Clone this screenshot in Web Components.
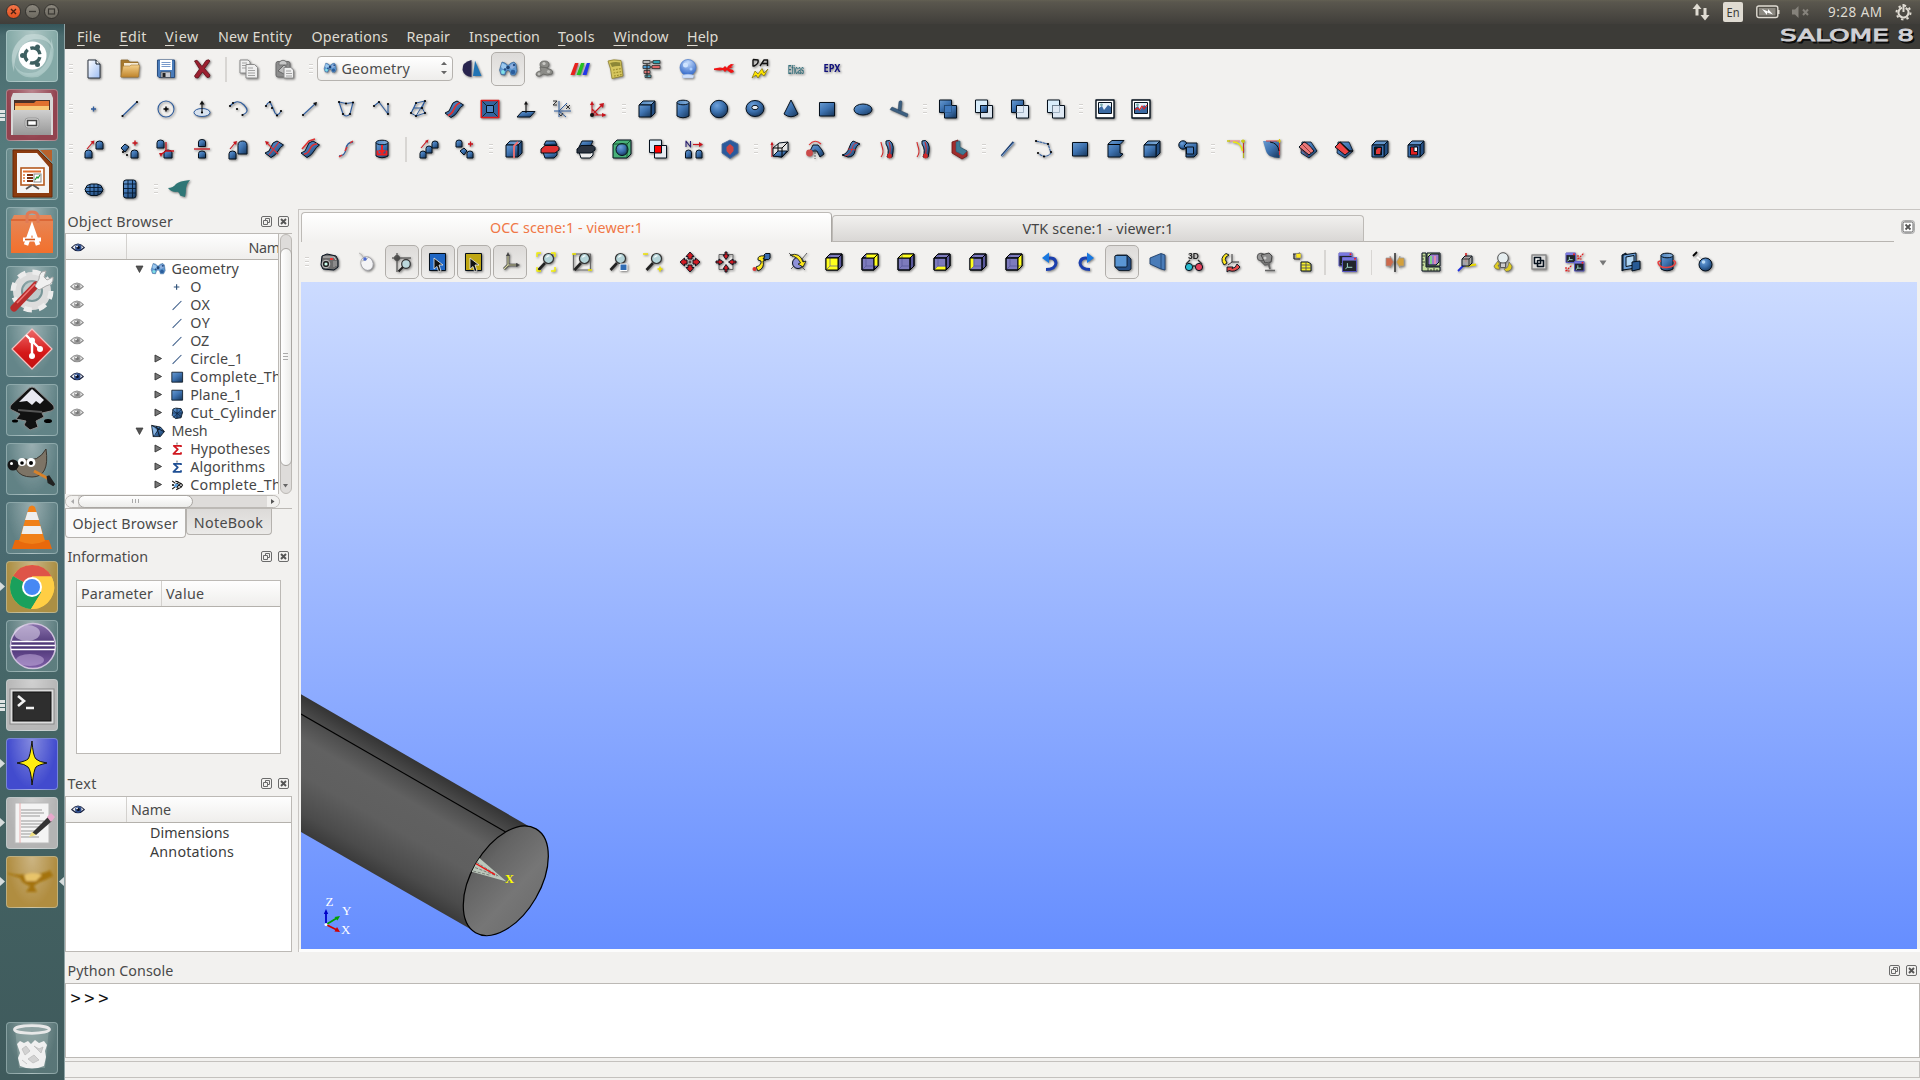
<!DOCTYPE html>
<html lang="en">
<head>
<meta charset="utf-8">
<title>SALOME 8</title>
<style>
html,body{margin:0;padding:0;width:1920px;height:1080px;overflow:hidden;background:#f2f1ef;font-family:"Noto Sans","Open Sans",sans-serif;font-size:14.3px;color:#4a4a4a}
</style>
</head>
<body>
<salome-desktop></salome-desktop>
<script>
const define = (name, css, html, setup) => customElements.define(name, class extends HTMLElement {
  connectedCallback() {
    if (this.shadowRoot) return;
    const root = this.attachShadow({mode: 'open'});
    root.innerHTML = `<style>:host{display:block;box-sizing:border-box}*{box-sizing:border-box}${css}</style>` + (typeof html === 'function' ? html(this) : html);
    if (setup) setup(this, root);
  }
});

/* ---------- icon drawings, 20x20 grid ---------- */
const R = '#c8141c', BL = '#2f5c9c';
const ln = (d, c = '#000', w = 1, x = '') => `<path d="${d}" fill="none" stroke="${c}" stroke-width="${w}" ${x}/>`;
const fl = (d, c, s = 'none', w = 1) => `<path d="${d}" fill="${c}" stroke="${s}" stroke-width="${w}"/>`;
const dot = (x, y, c = '#000', r = 1.1) => `<circle cx="${x}" cy="${y}" r="${r}" fill="${c}" stroke="none"/>`;
const dots = a => a.map(p => dot(p[0], p[1])).join('');
const house = (x, y, w = 7, h = 8) => `<path d="M${x} ${y + h}V${y + h * .35}Q${x} ${y} ${x + w / 2} ${y}Q${x + w} ${y} ${x + w} ${y + h * .35}V${y + h}Z"/>`;
const cube = (f = 'url(#b)', t = 'url(#l)', s = '#234d80', o = '') => `<path d="M2 6L6 2H18L14 6Z" fill="${t}"/><path d="M14 6L18 2V14L14 18Z" fill="${s}"/><path d="M2 6H14V18H2Z" fill="${f}"/>${o}`;
const mag = `${ln('M2.5 18L9 11', '#222', 2.6)}<circle cx="12.5" cy="6.5" r="5" fill="#b4d4d8" stroke="#333" stroke-width="1.2"/>${ln('M10.5 5.5q1-2 3-1.5', '#fff', 1.2)}`;
const sheet = '<path d="M1 14Q6 13 7 8T13 2L19.500 6Q16 8 14 12T7 18.500Z"/>';
const V = '#7d7bbd', Y = '#ffff1e';
const vc = (hl) => {
  const base = '<path d="M2 6L6 2H18L14 6Z" fill="' + V + '"/><path d="M14 6L18 2V14L14 18Z" fill="#5b599c"/><path d="M2 6H14V18H2Z" fill="' + V + '"/>';
  return base + fl(hl, Y, 'none') + ln('M6 2V14H18M2 18L6 14', '#55539a', .7) + ln('M2 6L6 2H18V14L14 18H2ZM2 6H14V18M14 6L18 2');
};
const sq = (x, y, f) => `<rect x="${x}" y="${y}" width="12" height="12.5" fill="${f}"/>`;
const cyl = '<path d="M4 3.500V17Q10 20.500 16 17V3.500"/><ellipse cx="10" cy="3.500" rx="6" ry="2.300" fill="url(#l)"/>';
const geo = '<g stroke="#2c5a8c" stroke-width=".6"><path d="M3 6L4 3 7 4 10 6.500 13 4 16 3 18 5 19 12 17 16 13 16 12 12.500 10 11 8 12.500 7 16 3 15.500 1.500 11Z" fill="#6098d0"/></g>' + fl('M4 4L8 6 9 9 5 10 3 8Z', '#9cc8ee') + fl('M12.500 6L16 4 17 8 14 10 12 9Z', '#8fb0de') + dot(5, 13, '#7fe0e6', 1.9) + dot(15, 13, '#2b5e9c', 2.3) + dot(10, 8.5, '#1e4070', 1.8) + dot(16, 6, '#2b4f86', 1.2) + dot(7, 10.5, '#24508c', 1.2);
const winIcon = (x, y, w) => `<rect x="${x}" y="${y}" width="${w}" height="${w}" fill="#20242a" stroke="#5a58c0"/><rect x="${x}" y="${y}" width="${w}" height="${w * .22}" fill="#7a78e0" stroke="none"/>${dot(x + w - 1.5, y + 1.3, '#e22', 1)}` + ln(`M${x + w * .35} ${y + w * .4}v${w * .3}h${w * .35}M${x + w * .35} ${y + w * .7}l-2 1.500`, '#bfe', .8);

const I = {
  new: '<path d="M4 1H12L16 5V19H4Z" fill="url(#pg)" stroke="#2c3440"/><path d="M12 1V5H16" fill="#fff"/>',
  open: '<path d="M1 1H8L9.500 3H18V18H1Z" fill="#a5782e" stroke="#8d6a30" stroke-width=".8"/><path d="M4 4H18V9H4Z" fill="#f4ead4" stroke="none"/><path d="M1 18L3 7H10L11 6H19.500L18.500 18Z" fill="url(#fo)" stroke="#a47a35" stroke-width=".6"/>',
  save: '<path d="M1.500 1H18.500V18.500H3L1.500 17Z" fill="#4a7cba" stroke="#2b4f80"/><rect x="4" y="1" width="12" height="10" fill="#fff" stroke="none"/>' + ln('M5.500 3.500H14.500M5.500 5.500H14.500M5.500 7.500H14.500', '#6a8fc4', .9) + '<rect x="5" y="13" width="9.500" height="5.500" fill="#c8ccd2" stroke="#333" stroke-width=".6"/><rect x="6.500" y="14" width="3" height="4" fill="#222" stroke="none"/>',
  del: '<path d="M2.500 2Q5.500 0 6.500 3L10 7.500 14 1.500Q17 0 18 2L12.500 9.500 18 16Q18 19 15 18.500L10.500 13 6 19Q3 19.500 2.500 17L7.500 10Z" fill="#9c2030" stroke="#5a1018" stroke-width=".8"/>',
  copy: '<g fill="#eee" stroke="#8b8b8b"><path d="M1 1H9L11 3V14H1Z"/>' + ln('M3 4H8M3 6.500H7M3 9H7', '#999', .9) + '<path d="M7 5.500H15.500L18.500 8.500V19H7Z"/></g>' + ln('M9 9H14M9 11.500H16M9 14H16M9 16.500H16', '#999', .9),
  paste: '<rect x="1" y="2.500" width="14" height="15.500" rx="2" fill="#8c8c8c" stroke="#6a6a6a"/><path d="M4 3.500Q8-1 12 3.500V6H4Z" fill="#c8c8c8" stroke="#777"/><path d="M3 12L9 6 14 10 9 15Z" fill="#bdbdbd" stroke="#666"/><path d="M9 8.500H16L18.500 11V19H9Z" fill="#eee" stroke="#8b8b8b"/>' + ln('M11 12H16M11 14.500H17M11 17H17', '#999', .9),
  shaper: fl('M9.500 1Q0 3 .5 11Q2 17 9.500 18Z', '#28244e') + fl('M13 1.500L19.500 17H11Z', '#2274b4'),
  geometry: geo,
  mesh: '<g fill="#8c8c88" stroke="#5e5e5a" stroke-width=".7"><ellipse cx="10.500" cy="5.500" rx="4.500" ry="3.500"/><path d="M6 8Q12 8 15 10Q20 11 18 15Q13 17 9 15Q5 19 2 16Q2 12 7 12Z"/></g>' + dot(10, 4.5, '#c8c8c4', 1.6) + dot(14.5, 12.5, '#bcbcb8', 1.6) + dot(5, 15, '#bcbcb8', 1.4),
  field: fl('M5 4H8.500L4.500 16H.5Z', '#e8211c') + fl('M11 4H14.500L10.500 16H6.500Z', '#24c022') + fl('M16.800 4H20L16.500 16H12.500Z', '#2338e8'),
  calc: '<path d="M2 2Q7 0 15 1.500L17 17 6 19.500Q5 9 2 2Z" fill="#d6c65e" stroke="#8f8230" stroke-width=".8"/><path d="M4 4Q9 2.500 14 3.500L14.500 7Q10 6.500 6 8Z" fill="#8d8736" stroke="none"/>' + ln('M7 11L15.500 9.500M7.500 14L16 12.500M8 17L16 15.500', '#9a8a2a', 1.1, 'stroke-dasharray="1.800 1.200"'),
  yacs: '<g stroke="#333" stroke-width=".8"><rect x="1" y="1.500" width="7" height="3" fill="#bbb"/><rect x="11" y="1.500" width="7" height="3" fill="#2da0b0"/><rect x="1" y="6.500" width="7" height="3" fill="#4b9ad0"/><rect x="10" y="6.500" width="8" height="3" fill="#d66"/><rect x="2" y="11.500" width="6" height="3" fill="#d77"/><rect x="3" y="16" width="6" height="2.500" fill="#5ab"/></g>' + ln('M9 3H11M8 8H10M5 5V18', '#222'),
  globe: '<circle cx="10" cy="8.500" r="8" fill="url(#gl)" stroke="#4a7acc" stroke-width=".7"/><path d="M4 16.500Q10 14 16 16.500L15 19H5Z" fill="#cfe0fa" stroke="#a8c0e8" stroke-width=".5"/>' + dot(7.5, 6, '#cfe4ff', 2.5) + dot(13, 10, '#a8ccff', 1.5),
  fish: fl('M0 9.500L6 8.500 9 9 11 7 13 9 14 7 17 5 20 5.500 17 7.500 19 8 15 9.800 19 11 20 13 17 14 14 12 13 11 11 13 9 11 6 11.500 0 11Z', '#f01414'),
  da: ln('M3 0.500V7H4Q9 5 8 1 6 0.500 3 .5M10 7L14 1H17.500L17.500 7M12 4.500H17.500', '#111', 1.4) + '<path d="M2 19L5 12 8 15 12 9.500 14 14 18 10 14 17 11 14.500 8 19 6 16Z" fill="#ffe600" stroke="#6b5e00" stroke-width=".6"/>',
  eficas: '<text x="2" y="14.500" font-size="13" font-weight="bold" textLength="16" lengthAdjust="spacingAndGlyphs" fill="#35707c" stroke="none" font-family="Liberation Sans">Eficas</text>',
  epx: '<text x="1.500" y="12.500" font-size="9.800" font-weight="bold" textLength="17" lengthAdjust="spacingAndGlyphs" fill="#10107c" stroke="none" font-family="Noto Sans">EPX</text>',
  point: ln('M7 10H12M9.500 7.500V12.500', BL, 1.3),
  line: ln('M2.500 17L17 3', BL, 1.2) + dots([[2.5, 17], [17, 3]]),
  circle: `<ellipse cx="10" cy="10" rx="8" ry="8" fill="none" stroke="${BL}" stroke-width="1.100"/>` + ln('M7.500 10H12.500M10 7.500V12.500', '#000', 1.4),
  ellipse: `<ellipse cx="10" cy="13.500" rx="8" ry="4" fill="#d8e2ee" stroke="${BL}"/>` + ln('M10 14V3', '#111', 1.1) + fl('M7.500 5.500L10 1.500 12.500 5.500Z', '#111') + dot(10, 13.5),
  arc: ln('M2 7Q9-1 16 6T14 16', BL, 1.2) + dots([[2, 7], [14.5, 16], [9, 10], [5, 4]]),
  curve: ln('M2 7Q5 1 7 5T11 14Q14 18 17 12', BL, 1.2) + dots([[2, 7], [6, 3], [8, 9], [13, 16.5], [17, 12]]),
  vector: ln('M3 16L16 4', BL, 1.1) + fl('M13 4L17 3 16 7Z', '#111') + dot(3, 16),
  sketch: ln('M3 3L10 4.500L17 3.500L14 15Q10 19 7 15Z', BL, 1.1) + dots([[3, 3], [17, 3.5], [14, 15], [7, 15], [10, 4.5]]),
  poly: ln('M2 7L7 3 16 15V5', BL, 1.1) + dots([[2, 7], [7, 3], [16, 15], [16, 5]]),
  sketch3: ln('M8 4L17 2 14 9 17 14 8 17 3 14 6 9ZM6 9L14 9M8 4L3 14M17 2L8 17', BL, 1) + dots([[8, 4], [17, 2], [8, 17], [3, 14], [14, 9], [17, 14]]),
  ribbon: sheet + ln('M4 16.500Q8 15 10 10T16 4', '#e03030', 1.8),
  frame: `<rect x="1.300" y="1.500" width="17.400" height="17" fill="#33659f" stroke="#e01a1a" stroke-width="1.600"/><rect x="6.500" y="6.500" width="7" height="7" fill="#4f86c4"/>` + ln('M2.500 2.500L6.500 6.500M17.500 2.500L13.500 6.500M2.500 17.500L6.500 13.500M17.500 17.500L13.500 13.500', '#122', .9),
  wplane: '<path d="M1 18L6 12.500H19L14 18Z"/>' + ln('M10 14V4', '#111', 1.1) + fl('M8 5.500L10 2 12 5.500Z', '#111'),
  lcs: ln('M7 2V18M2 12H19M7 12L15 4M7 12L14 18', BL, 1) + ln('M1 2H5L1 6H5M14 6L18 10M18 6L14 10M7 15L9 17 11 14', '#222', .9),
  origin: ln('M4 16V4M4 16H17M4 16L14 6M4 10L10 16', R, 1.1) + fl('M2 6L4 2 6 6ZM14 14L18.500 16 14 18ZM11 5L16 4 15 9Z', R) + dot(4, 16, '#111', 2),
  box: cube(),
  cyl,
  sphere: '<circle cx="10" cy="10" r="8.700" fill="url(#r)"/>',
  torus: '<ellipse cx="10" cy="9.500" rx="9" ry="8" fill="url(#r)"/><ellipse cx="10" cy="8.500" rx="3.200" ry="2.200" fill="#e8eef4"/>',
  cone: '<path d="M10 1L17 15Q10 20.500 3 15Z"/>',
  rect: '<rect x="2.500" y="3.500" width="15" height="13.500"/>',
  disk: '<ellipse cx="10" cy="10.500" rx="9" ry="5.500"/>',
  pipet: fl('M1 10.500L3 8 19 15 18 18ZM9 11L10 2.500Q12 1 13 2.500L12 12Z', '#3c5f80', '#2a4764', .5),
  fuse: sq(1.5, 1, 'url(#b)') + sq(6.5, 6.5, 'url(#b)') + '<path d="M6.500 6.500H13.500V13.500H6.500Z" fill="#4079bd" stroke="#27517f" stroke-width=".6"/>',
  common: sq(1.5, 1, '#d8ecfa') + sq(6.5, 6.5, '#dbe4ee') + '<rect x="6.500" y="6.500" width="7" height="7"/>',
  cut: sq(1.5, 1, 'url(#b)') + sq(6.5, 6.5, '#dfe9f4') + ln('M6.500 13.500H13.500V6.500', '#8ea0b4', .8),
  section: sq(1.5, 1, '#d8ecfa') + sq(6.5, 6.5, '#dfe9f4') + '<rect x="6.500" y="6.500" width="7" height="7" fill="none" stroke="#8fa3b5" stroke-width=".8"/>',
  pic1: '<rect x="1" y="1" width="18" height="18" fill="#fff" stroke-width="1.400"/><rect x="3.500" y="3.500" width="13" height="11" fill="#e6f0f8"/><path d="M4 14V9L7 7 9 11 13 6 16 8V14Z" fill="#3b6aa2" stroke="none"/>' + dot(6.5, 5.8, '#7aa', 1.4),
  translate: house(1, 11) + house(12, 2) + ln('M3 10L9 3', R, 1.1) + fl('M6.500 2.500L10.500 1.500 9.500 5.500Z', R),
  rotate: '<path d="M1 9L5 5 9 8 5 13Z"/>' + house(11, 11, 7, 8) + ln('M12.500 4H17.500M15 1.500V6.500', R, 1.4) + dots([[3, 13], [7, 16]]),
  local: house(1, 1, 7, 8) + house(8, 11, 8, 8) + ln('M10 3V12H18M10 12L4 16', R, 1.3) + fl('M3 14L7 14 5 18Z', R),
  mirror: house(6.5, 0.5, 7, 7) + house(6.5, 12, 7, 7) + ln('M2 10H18', R, 1.3),
  scale: house(1, 12) + house(10, 2, 9, 13) + ln('M2 10L7 4', R, 1.1) + fl('M5 3L9 2 8 6Z', R),
  offset: sheet + ln('M3 4L14 15M15 3L5 16', '#e03030', 1.1) + fl('M1 2L5 3 2.500 6Z', R),
  project: sheet + ln('M2 10L9 2 15 0M4 15Q8 15 10 10T17 5', '#e03030', 1.5),
  ridge: ln('M3 17Q9 17 10 10T17 3', BL, 1.3) + ln('M3 18L6 16M9 12L11 8M14 4L17 2', '#e03030', 1.5),
  tap: cyl + ln('M10 6V14M5.500 11.500V15.500H14.500V11.500', '#f02020', 2) + fl('M6.500 11L10 15.500 13.500 11Z', '#f02020'),
  multi: house(1, 12, 6, 7) + house(7, 7, 6, 7) + house(13, 2, 6, 7) + ln('M2 9L8 2', R, 1.1) + fl('M6 2L9.500 .5 8.500 4Z', R),
  mrot: house(1, 1, 6, 7) + '<path d="M5 12L9 9 12 12 9 16Z"/>' + house(12, 12, 6, 7) + ln('M13 5H18M15.500 2.500V7.500', R, 1.3),
  part: cube() + ln('M10 19V7L14 3', '#f07070', 1.8),
  cut2: '<path d="M6 2H15L17 6H4Z"/><path d="M3 13H17V16L14 19H5Z"/><path d="M1 10L5 6.500H17L19 8.500V11L15 14H1Z" fill="#e03030"/>',
  slice: '<path d="M6 2H17L14 8H3Z"/><path d="M3 13H17V16L14 19H5Z" fill="#eee"/><path d="M1 10L5 6.500H17L19 8.500V11L15 14H1Z" fill="#2c3440"/>',
  shrink: '<path d="M1 5L5 1H19V15L15 19H1Z" fill="#48b078"/><circle cx="10" cy="10.500" r="6" fill="url(#r)"/>' + ln('M1 5H15V19M15 5L19 1', '#0c3c20', .8),
  same: sq(1.5, 1, '#d8ecfa') + sq(6.5, 6.5, '#e6eaf0') + '<rect x="6.500" y="6.500" width="7" height="7.500" fill="#f00"/>',
  nto: house(1.5, 11, 6, 8) + house(12, 11, 6, 8) + ln('M2 8V2L6.500 8V2', '#271c70', 1.1) + ln('M9 5.500H16', R, 1.2) + fl('M15 3L19 5.500 15 8Z', R),
  shield: '<path d="M10 1L18 5V14L10 19.500 2 14V5Z" fill="#2a5a9c" stroke="#4a6a9c" stroke-width=".8"/>' + fl('M10 5L13.500 8V12L10 16 6.500 12V8Z', '#cc4444'),
  ext: ln('M3 18V4', R, 1.1) + fl('M1.500 6L3 2.500 4.500 6Z', R) + '<path d="M4 9L10 4 19 3V12L13 18 4 17Z" fill="#e4e4e4"/><path d="M4 17L9 12H18L13 18Z"/>' + ln('M4 9L13 9V18M13 9L19 3M9 5V12', '#000', 1),
  rev: '<path d="M5 12L8 6H13L17 11 19 15 15 18 12 12 9 12Z"/>' + dot(4.5, 14, '#cc4a4a', 3.4) + ln('M4 6Q10-1 16 5', '#e03030', 1.1) + ln('M10 10V20', '#444', .8, 'stroke-dasharray="2 1"'),
  fill: '<path d="M1 16Q6 15 8 9T12 2L19 5Q15 6 14 12T7 18Z"/>' + ln('M4 17Q10 16 11 10T16 4M7 10L15 11', '#e03030', .9),
  pipe: '<path d="M9 2Q13 0 15 4Q17 8 16 13L15 18H10Q13 11 9 5Z"/>' + ln('M4 18Q7 14 5.500 9T4 3M12 3Q14.500 9 12 17', '#d02828', 1.1) + dot(12.5, 17, '#d02828', 2.4),
  thick: fl('M3 3L9 1V8L18 12V17L13 20L3 14Z', '#a02c2c', '#701818', .8) + fl('M7 3L11 2V8L18 12 14 16 7 12.500Z', '#3f7a94', '#2b5a70', .6),
  edge: ln('M3.500 17L15.500 3', '#1c3c6c', 2) + ln('M4 17L16 3.500', '#8ab0e0', 1),
  wire: ln('M2 2L14 5 17 14Q12 20 5 15', BL, 1.1, 'stroke-dasharray="3 .5"') + dots([[2, 2], [14, 5], [17, 13], [4, 14], [10, 17.5]]),
  shell: '<path d="M2 5L6 1.500H18L14 5.500V14L17 15 14 18H2Z"/>' + ln('M2 5.500H14', '#000'),
  comp: '<circle cx="5" cy="6" r="4.200" fill="url(#r)"/><path d="M6 7L9 4H19V15L16 18H8V9Z"/><rect x="8.500" y="8" width="7" height="7" fill="#4a7fc0"/>',
  fillet1: ln('M17.500 2V19', '#b4b420', 1.2) + ln('M3 2H14', '#e88', 1.2) + ln('M17.500 4V14', '#c03030', 1) + ln('M7 3Q15 3 16.500 12', '#eaea10', 1.4) + ln('M1 2H4M15 2H19M17 .5V4', '#c8c810', 1.4),
  fillet2: fl('M1 2H17.500V19Q6 19 4 12Z', 'url(#b)') + ln('M4 2H17.500V16', '#d84040', 1.1) + ln('M8 3Q16 4 17 12', '#111', 1) + ln('M15 2H19M17.500 0V4', '#d8c810', 1.2),
  fillet3: '<path d="M4 3H13L19 12 11 19 3 14Z" stroke-width=".8"/><path d="M1 8L6 3Q10 4 16 12L11 16Z" fill="#e87878"/>' + ln('M4 5L13 14M2.500 10L10 17', '#822', .8),
  chamfer: '<path d="M4 3H15L19 12 11 19 3 14Z" stroke-width=".8"/><path d="M1 8L6 3 16 12 11 16Z" fill="#f04444"/>' + ln('M6 3L15 12H19', '#111', 1.3),
  hexf: cube('#3d70ae', '#6394ca', '#234d80', '<rect x="4.500" y="8" width="7" height="8" fill="#101820"/><path d="M6 11L8 9H11L10 15H6Z" fill="#e23a3a" stroke="none"/>'),
  hexw: cube('#3d70ae', '#6394ca', '#234d80', '<rect x="4.500" y="8" width="7" height="8" fill="#e22020"/><rect x="8" y="8" width="3.500" height="4.500" fill="#fff"/>'),
  quad: '<path d="M1 10.500L3 6.500 7 5H13L17 6.500 19 10.500 17 14.500 13 16.500H7L3 14.500Z"/>' + ln('M2 8.500H18M1 12.500H19M6 5V16M10 5V16.500M14 5V16', '#061a30', .9),
  hex: '<rect x="3.500" y="1" width="12.500" height="18" rx="2.500"/>' + ln('M4 5H16M4 9.500H16M4 14H16M8 1V19M12.500 1V19', '#061a30', .9),
  hexotic: fl('M-1 9Q4 9 7 5Q10 2 21 1Q18 4 17 9Q17 14 16 18L11 16.500Q10 12 7 13Q2 13 -1 9Z', '#2f7676'),
  /* viewer icons */
  camera: '<path d="M2 4L7 2 16 4 18 8V15L14 18 3 17 1 13Z" fill="#6c6c6c"/><path d="M3 5H14L16 8" fill="none" stroke="#ccc"/><circle cx="6" cy="12" r="3.800" fill="#222" stroke="#ccc"/>' + dot(6, 12, '#cfe', 1.6) + fl('M10 6H13V8H10Z', '#e33') + ln('M14 9V15M16 9V14', '#bbb', .8),
  mouse: '<ellipse cx="11" cy="11.500" rx="6" ry="7" fill="#f4f4f6" stroke="#a0a0a6" transform="rotate(-25 11 11.500)" stroke-width=".8"/>' + ln('M6 9Q10 9 13 5', '#aaa', .8) + dot(9, 7, '#4a6ad0', 1.8) + ln('M7 5Q6 2 3 1', '#aaa', .8),
  zstyle: ln('M0 6H19M5 1V20M3 4H7V8H3Z', '#333', 1) + '<circle cx="14" cy="12" r="4.300" fill="#bcd8dc" stroke="#333" stroke-width="1.200"/>' + ln('M11 15L6.500 19.500', '#222', 2.2),
  sel1: '<rect x="1.500" y="1.500" width="16" height="17" fill="#1f66c4"/><path d="M6 6L15 13H11L13 19 10.500 19.500 9 14.500 6 17Z" fill="#111" stroke="#eee" stroke-width=".8"/>',
  sel2: '<rect x="1.500" y="1.500" width="16" height="17" fill="#bfa714"/><path d="M6 6L15 13H11L13 19 10.500 19.500 9 14.500 6 17Z" fill="#111" stroke="#eee" stroke-width=".8"/>',
  trihedron: ln('M8 3V13L4 17M8 13H18', '#333', 2.6) + ln('M8 3V13L4 17M8 13H18', '#d8d8a8', 1.2) + fl('M6 4L8 0 10 4ZM16 11L20 13 16 15Z', '#444'),
  fitall: mag + ln('M1 5V1H5M15 1H19V5M1 15V19H5M15 19H19V15', '#f4f000', 1.4),
  fitarea: '<rect x="1.500" y="2" width="17" height="16" fill="none" stroke="#666" stroke-width="1.200"/>' + mag + ln('M0 2H4M16 18H20', '#f0e800', 1.6),
  fitsel: mag + '<rect x="12" y="12" width="7" height="6.500" fill="#2f6cb4" stroke="#fff"/>',
  zoom: mag + ln('M-1 2H4M13.500 17H18.500M16 14.500V19.500', '#f0e400', 1.5),
  pan: '<g fill="#d01c24" stroke-width=".9"><path d="M10 0L14 4.500H12V7H8V4.500H6Z"/><path d="M10 20L14 15.500H12V13H8V15.500H6Z"/><path d="M0 10L4.500 6V8H7V12H4.500V14Z"/><path d="M20 10L15.500 6V8H13V12H15.500V14Z"/></g>' + ln('M8.500 10H11.500M10 8.500V11.500', '#111', .8),
  gpan: '<rect x="3" y="2.500" width="14" height="15" fill="none" stroke="#666"/><g fill="#d01c24" stroke-width=".9"><path d="M10 7.500L7 3H9V0H11V3H13Z"/><path d="M10 12.500L7 17H9V20H11V17H13Z"/><path d="M7.500 10L3 7V9H0V11H3V13Z"/><path d="M12.500 10L17 7V9H20V11H17V13Z"/></g>',
  chpt: '<path d="M12 3L13.500 1.500H18V6L16.500 7.500H12Z" fill="#3a6cb0"/><path d="M13 4Q5 3 6 8L9 9Q10 13 4 15L6 19Q13 16 11 9L14 8 11 7Z" fill="#ffe81c" stroke-width=".9"/>' + dot(2.5, 17, '#d33', 2),
  rot: ln('M1 1L5 5M19 1L14 7M17 18L13 14M3 17L6 14', '#555', .9) + '<circle cx="10" cy="11" r="5.500" fill="#8f92d8"/><path d="M2 3Q12 0 15 10L18 9 15 15 10 12 12.500 11Q10 5 2 3Z" fill="#ffe81c" stroke-width=".8"/>',
  vfront: vc('M2 6H14V18H2Z'), vback: vc('M6 2H18V14L14 14V6H6Z'), vtop: vc('M2 6L6 2H18L14 6Z'), vbottom: vc('M2 18L5 14.500H14V18Z'), vleft: vc('M2 6H5.500V14.500L2 18Z'), vright: vc('M14 6L18 2V14L14 18Z'),
  ccw: ln('M6 7Q15 4 16 11Q15.500 17.500 6 17.500', '#1b3fae', 3) + fl('M2 6L9 0.500V11Z', '#1878e0'),
  cw: ln('M14 7Q5 4 4 11Q4.500 17.500 14 17.500', '#1b3fae', 3) + fl('M18 6L11 0.500V11Z', '#1878e0'),
  ortho: '<path d="M3 4L5 3H15L19 7V17L17 18.500H7L3 15Z" fill="#254f86" stroke-width=".8"/><rect x="3" y="3.500" width="12" height="11.500" rx="1" fill="#5a96d4" stroke-width=".8"/>',
  persp: '<path d="M2 6L13 1.500 17 3V18L13 17 2 12Z" fill="#4a7cb8" stroke="#1d3f6c" stroke-width=".9"/>' + ln('M13 2V17', '#1d3f6c', .8),
  stereo: '<text x="4" y="7" font-size="8.500" font-weight="bold" fill="#222" stroke="none" font-family="Liberation Sans">3D</text><circle cx="5" cy="15" r="3.600" fill="#28bcd0"/><circle cx="15" cy="15" r="3.600" fill="#e4405a"/>' + ln('M2 12L6 8M18 12L14 8M8.500 14H11.500', '#333', 1.3),
  resetv: ln('M12 2V10L8 13M12 10H19', '#333', 1) + '<path d="M4 13Q-1 6 6 1.500L9 3 6 5Q4 7 7 11Z" fill="#ffe81c" stroke-width=".9"/><path d="M7 15L13 15 12 16.500Q16 16 17 12L20 15Q15 21 9 18.500L7 20Z" fill="#e64a48" stroke-width=".9"/>',
  graph: '<circle cx="5" cy="5" r="3.800" fill="#999" stroke="#555"/><path d="M5 3L13 1 16 4 15 10 9 11Z" fill="#8c8c8c" stroke="#444"/>' + ln('M12 10L14 17M5 9L9 13 14 12M9 18.500H19', '#666', 1.7) + dot(9, 6, '#ccc', 1.5),
  dump: ln('M1 2H5L8 1M2 2V7M2 7H8', '#222', 1.2) + '<rect x="4" y="1.500" width="5" height="4.500" fill="#ffe81c" stroke="#888" stroke-width=".6"/><path d="M9 10H16L19 12V19H9Z" fill="#f6ee2c"/>' + ln('M9 13H19M9 16H19M14 10V19', '#555', .9),
  sync: winIcon(1, 1, 13) + winIcon(4.5, 5.5, 14),
  flip: ln('M10 1V20', '#111', 1.3) + fl('M1 6H5L5 4 8.500 10 5 16V14H1Z', '#cc6a4c', '#999', .6) + fl('M19 6H15L15 4 11.500 10 15 16V14H19Z', '#d3a03c', '#999', .6),
  ruler: '<path d="M1 1H5V15H19V19H1Z" fill="#c4dc9c"/>' + ln('M1 4H4M1 7H3M1 10H4M1 13H3M7 19V16M10 19V17M13 19V16M16 19V17', '#222', .8) + '<path d="M6 1H19V14H6Z" fill="#c4dc9c"/><path d="M7 5L10 2H18V10L15 13H7Z" fill="#9a7fc8"/>' + fl('M9 4H11V12H9Z', '#7bd08a') + fl('M13 4H15V12H13Z', '#e088b0'),
  axes: ln('M9 10V1', '#e02020', 1.6) + ln('M9 14L19 12.500', '#e8d800', 1.8) + ln('M8 12L1 19', '#2030e0', 1.8) + '<path d="M5 7L8 4H15V11L12 14H5Z" fill="#aaa" fill-opacity=".85"/>' + ln('M5 7H12V14M12 7L15 4', '#222', .9),
  light: '<path d="M1 14L5 9 7 13 5 13 7 17Q2 18 1 14Z" fill="#e0cc20" stroke="#665" stroke-width=".7"/><path d="M19 14L16 10 15 14Q15 16 11 17L13 19.500Q19 19 19 14Z" fill="#e0cc20" stroke="#665" stroke-width=".7"/><circle cx="10" cy="6" r="5.300" fill="#e6eef0" stroke="#444" stroke-width=".9"/><path d="M7.500 11H12.500V15.500H7.500Z" fill="#ccc" stroke="#444" stroke-width=".8"/>',
  minim: '<rect x="3" y="3" width="14" height="14" fill="#d8d8d8" stroke="#8a8a8a" stroke-width="1.400"/><rect x="5.500" y="5.500" width="6" height="6" fill="#fff" stroke-width="1.600"/><rect x="8.500" y="8.500" width="6" height="6" fill="none" stroke-width="1.600"/>',
  syncv: winIcon(1, 1, 9.5) + winIcon(9.5, 9.5, 9.5) + ln('M13 7L19 1M13 3V7H17M1 19L7 13M1 15V19H5', '#e02020', 1.2, 'stroke-dasharray="2 .8"'),
  clip: '<path d="M1 3L5 1V16L1 19Z" fill="#2a5488"/><path d="M2 3L15 1V16L2 18Z" fill="#6ca0d8"/><path d="M5 5L13 3.500V13L5 14.500Z" fill="#b4d8f4"/><path d="M11 10L19 9V17L11 19Z" fill="#285a94"/>',
  ccyl: cyl + ln('M4 9Q0 9 1.500 12Q4 16 10 15.500Q17 15 18.500 11Q18 8 16 9', '#e84040', 1.5),
  ray: ln('M0 4L4 0', '#000', 1.8) + ln('M4 5L9 9', '#fff', 2) + '<circle cx="12.500" cy="12.500" r="6.500" fill="url(#r)"/>' + dot(10.5, 10, '#b8d8f4', 1.8),
  drop: fl('M6.500 8.500H13.500L10 13.500Z', '#777'),
  /* tree icons */
  tpoint: ln('M6 10H13M9.500 6.500V13.500', '#33557c', 1.5),
  tline: ln('M4.500 16L15.500 5', '#3b5c88', 1.3),
  tface: '<rect x="3.500" y="4" width="13.500" height="12.500"/>',
  tcomp: '<path d="M5 5L8 4 15 4.500 17 9 15 16 8 17 4 13Z"/>' + ln('M4 6L16 15M16 5L5 16M4 10H17M10 3.500V17', '#0b1d33', .8),
  tmesh: '<path d="M2 3L13 5 18 10.500 13 17 4 17Z"/>' + ln('M2 3L18 11M4 17L13 5M8 4L12 17', '#000', .9) + fl('M3 4L9 9 5 16Z', '#8ab4e0'),
  thyp: ln('M15 7.500V6H6L11 10.500 5.500 16H15V14', '#d01820', 2.2) + ln('M10 2V4.500', '#555', 1.2),
  talg: ln('M15 7.500V6H6L11 10.500 5.500 16H15V14', '#1f4f94', 2.2) + ln('M10 2V4.500', '#555', 1.2),
  tm: ln('M4 5L8 8M4 15L8 12M8 5L15 8 17 10 15 13 9 16M9 8L15 12M9 13L15 8M11 5V15', '#111', 1.3) + fl('M8 8L12 9 9 13 6 12Z', '#5fa0dc') + dot(5, 10, '#111', 1.4)
};
I.pic2 = I.pic1 + ln('M4 11L6.500 9 8.500 11 11 7 13 10 16 6', '#e02020', 1.2);
I.pipe2 = I.pipe;

const DEFS = `<defs><linearGradient id="b" x1="0" y1="0" x2=".8" y2="1"><stop offset="0" stop-color="#6a9bd0"/><stop offset=".5" stop-color="#3f74b2"/><stop offset="1" stop-color="#1d4069"/></linearGradient><linearGradient id="l" x1="0" y1="0" x2="1" y2="0"><stop offset="0" stop-color="#4f84bd"/><stop offset="1" stop-color="#85b0dc"/></linearGradient><radialGradient id="r" cx=".38" cy=".3" r=".8"><stop offset="0" stop-color="#6fa2dc"/><stop offset=".5" stop-color="#3a6fac"/><stop offset="1" stop-color="#142f52"/></radialGradient><radialGradient id="gl" cx=".5" cy=".2" r=".8"><stop offset="0" stop-color="#c5dcfc"/><stop offset="1" stop-color="#2f66c8"/></radialGradient><linearGradient id="pg" x1="0" y1="0" x2="1" y2="1"><stop offset="0" stop-color="#fff"/><stop offset="1" stop-color="#9cbcf2"/></linearGradient><linearGradient id="fo" x1="0" y1="0" x2="0" y2="1"><stop offset="0" stop-color="#f4d08a"/><stop offset="1" stop-color="#c0852c"/></linearGradient></defs>`;

define('x-icon', ':host{display:block;width:20px;height:20px;flex:none}svg{display:block;width:100%;height:100%;overflow:visible}.s{filter:drop-shadow(1px 1px .8px rgba(0,0,0,.5))}',
  el => `<svg viewBox="0 0 20 20" class="${el.hasAttribute('flat') ? '' : 's'}">${DEFS}<g fill="url(#b)" stroke="#05101c" stroke-width="1" stroke-linejoin="round">${I[el.getAttribute('name')] || ''}</g></svg>`);

/* text run fitted to a given advance width by tracking */
define('fit-text', ':host{display:block;white-space:pre;flex:none}span{display:inline-block}', '<span><slot></slot></span>', (el, root) => {
  const span = root.querySelector('span'), n = [...el.textContent].length, w = +el.getAttribute('w');
  if (w) { span.style.letterSpacing = ((w - span.getBoundingClientRect().width) / n) + 'px'; el.style.width = w + 'px'; }
});

define('tool-strip', `:host{display:flex;align-items:center}
.c{width:36px;height:36px;display:flex;align-items:center;justify-content:center;flex:none}
.a{width:34px;height:34px;margin:0 1px;border:1.5px solid #b1aeaa;border-radius:5px;background:linear-gradient(#dddbd9,#efeeec)}
.g{width:12.75px;flex:none;display:flex;flex-direction:column;gap:2px;padding-left:5.500px}.g i{width:4px;height:2px;background:#d4d2cf;border-bottom:1px solid #fff}
.p{width:var(--sep,11px);flex:none;display:flex;justify-content:center}.p i{width:1.500px;height:25px;background:#d8d6d3}
.d{width:20px;display:flex;justify-content:center}`,
  el => el.getAttribute('items').trim().split(/\s+/).map(t =>
    t === ':' ? '<div class="g"><i></i><i></i><i></i></div>' : t === '|' ? '<div class="p"><i></i></div>' :
    t === 'combo' ? '<module-combo></module-combo>' : t === 'drop' ? '<div class="d"><x-icon flat name="drop"></x-icon></div>' :
    t[0] === '*' ? `<div class="c a"><x-icon name="${t.slice(1)}"></x-icon></div>` : `<div class="c"><x-icon name="${t}"></x-icon></div>`).join(''));

define('module-combo', `:host{display:flex;align-items:center;width:136px;height:25px;margin:-2px 1.500px 0 .5px;flex:none;border:1.500px solid #b6b3af;border-radius:4px;background:linear-gradient(#fff,#eeedeb);padding:0 5px;color:#4c4c4c}
x-icon{width:14px;height:14px;margin-right:5px}.f{flex:1}svg{width:8px;height:14px;margin-right:-1px}`,
  '<x-icon name="geometry"></x-icon><fit-text w="68.5">Geometry</fit-text><div class="f"></div><svg viewBox="0 0 8 14"><path d="M1 4L4 .8 7 4ZM1 10L4 13.200 7 10Z" fill="#666"/></svg>');

define('title-bar', `:host{display:flex;align-items:center;height:24px;background:linear-gradient(#636053 0,#5a574e 2px,#403e3a);padding:0 8px 1px 6px;color:#dfdbd2;font-size:13.500px}
.w{width:15px;height:15px;border-radius:50%;margin-right:4px;display:flex;align-items:center;justify-content:center;background:linear-gradient(#8b877d,#6c6960);border:1px solid #35332f}.x{background:linear-gradient(#f4764a,#e2511f)}
.w svg{width:9px;height:9px}.f{flex:1}.t{display:flex;align-items:center;height:24px;padding-top:1px}`,
  `<div class="w x"><svg viewBox="0 0 9 9"><path d="M2 2L7 7M7 2L2 7" stroke="#4a2012" stroke-width="1.400"/></svg></div><div class="w"><svg viewBox="0 0 9 9"><path d="M1 4.500H8" stroke="#3a3833" stroke-width="1.300"/></svg></div><div class="w"><svg viewBox="0 0 9 9"><rect x="1.500" y="2" width="6" height="5" fill="none" stroke="#3a3833" stroke-width="1.200"/></svg></div><div class="f"></div>
<div class="t"><svg width="18" height="18" viewBox="0 0 18 18" style="margin-right:13px"><g fill="#dfdbd2"><path d="M.5 6L5 0.500 9.500 6H6.500V12.500H3.500V6Z"/><path d="M8.500 12L13 17.500 17.500 12H14.500V5H11.500V12Z"/></g></svg>
<svg width="20" height="20" viewBox="0 0 20 20" style="margin-right:13px"><rect width="20" height="20" rx="2" fill="#dfdbd2"/><text x="3.500" y="15" font-size="13" textLength="13" lengthAdjust="spacingAndGlyphs" fill="#3c3b37" font-family="Noto Sans">En</text></svg>
<svg width="24" height="14" viewBox="0 0 24 14" style="margin-right:12px"><rect x=".8" y="1" width="21" height="11.500" rx="2" fill="none" stroke="#dfdbd2" stroke-width="1.400"/><rect x="3" y="3" width="16.500" height="7.500" fill="#8b8880"/><path d="M22 5H23.500V9H22Z" fill="#dfdbd2"/><path d="M6 4L12 6.500V4L17 9.500 11 7.500V10Z" fill="#fff"/></svg>
<svg width="18" height="14" viewBox="0 0 18 14" style="margin-right:18px"><path d="M0 4.500H3L6.500 1V13L3 9.500H0Z" fill="#85827b"/><path d="M11 4.500L16 10M16 4.500L11 10" stroke="#85827b" stroke-width="2"/></svg>
<fit-text w="54.5" style="margin:-1px 12.500px 0 0">9:28 AM</fit-text>
<svg width="17" height="18" viewBox="0 0 17 18"><circle cx="8.500" cy="9.500" r="5" fill="none" stroke="#dfdbd2" stroke-width="2.200" stroke-dasharray="27 4.400" transform="rotate(-65 8.500 9.500)"/><circle cx="8.500" cy="9.500" r="7" fill="none" stroke="#dfdbd2" stroke-width="2" stroke-dasharray="2.400 3.100"/><path d="M8.500 1V9" stroke="#dfdbd2" stroke-width="2"/></svg></div>`);

define('menu-bar', `:host{display:flex;align-items:center;height:25px;background:#3c3b37;color:#dfdbd2;padding:0 6px 0 12px}
u{text-underline-offset:3px}.f{flex:1}svg{display:block;overflow:visible}`,
  () => [['<u>F</u>ile', 24, 18.5], ['<u>E</u>dit', 27.5, 18], ['<u>V</u>iew', 34, 19], ['New Entity', 74, 19.5], ['Operations', 76.5, 18.5], ['Repair', 43.5, 19], ['Inspection', 71, 18], ['<u>T</u>ools', 37, 18.5], ['<u>W</u>indow', 55, 18.5], ['<u>H</u>elp', 31.5, 0]]
    .map(m => `<fit-text w="${m[1]}" style="margin-right:${m[2]}px">${m[0]}</fit-text>`).join('') +
    '<div class="f"></div><svg width="134" height="20" viewBox="0 0 134 20"><g font-family="DejaVu Sans" font-size="16.500"><text x="1.500" y="15.500" textLength="134" lengthAdjust="spacingAndGlyphs" fill="#0c0c0c" stroke="#0c0c0c" stroke-width=".8">SALOME 8</text><text x="0" y="14" textLength="134" lengthAdjust="spacingAndGlyphs" fill="#d0d0d4" stroke="#d0d0d4" stroke-width=".8">SALOME 8</text></g></svg>');

/* ---------- launcher ---------- */
const L = {
  dash: '<circle cx="26" cy="26" r="20" fill="#a8c4c2" opacity=".4"/><path d="M8 42Q0 18 20 5Q44 0 48 22Q44 8 28 9Q8 14 8 42Z" fill="#d5e6e4" opacity=".5"/><path d="M45 8Q54 34 32 47Q12 50 8 34Q14 46 30 42Q46 34 45 8Z" fill="#c2dad8" opacity=".5"/><circle cx="26.500" cy="25.500" r="14" fill="#fff"/><circle cx="26.500" cy="25.500" r="7.500" fill="none" stroke="#3d5f60" stroke-width="3.400" stroke-dasharray="12.700 3" transform="rotate(12 26.500 25.500)"/><g fill="#3d5f60"><circle cx="16.500" cy="25.500" r="2.500"/><circle cx="31.500" cy="17" r="2.500"/><circle cx="31.500" cy="34.500" r="2.500"/></g>',
  files: '<path d="M7 4H45L47 9V46H5V9Z" fill="#d8d8d8"/><rect x="8" y="11" width="36" height="14" fill="#4a3028"/><path d="M9 14H28L30 12H43V22H9Z" fill="#e07030"/><path d="M9 17H43V22H9Z" fill="#f8c878"/><path d="M7 21H45V46H7Z" fill="url(#gg)"/><rect x="19" y="29" width="14" height="10" rx="3" fill="#d4d4d4" stroke="#999"/><rect x="21.500" y="31.500" width="9" height="5" fill="#fff" stroke="#444" stroke-width="1.500"/>',
  impress: '<path d="M7 2H32L46 16V49H7Z" fill="#8c3c10" stroke="#6a2a08"/><path d="M11 5H31L43 19V45H11Z" fill="#f4f4f4"/><path d="M34 2H46V14Z" fill="#b8622c"/><rect x="15" y="20" width="23" height="17" fill="#fff" stroke="#b55a20" stroke-width="1.600"/><path d="M17 23.500H35" stroke="#e07030" stroke-width="2"/><path d="M17 27H19M17 30H19M17 33H19" stroke="#e07030" stroke-width="1.600"/><path d="M21 27H27M21 30H27M21 33H27" stroke="#7a3010" stroke-width="1.800"/><rect x="28" y="26" width="7" height="8" fill="#fff" stroke="#888"/><path d="M29 32L31 29 32 30 34 27" stroke="#1a9a30" fill="none" stroke-width="1.200"/><path d="M26 37L20 41M27 37L33 41" stroke="#555" stroke-width="1.800"/>',
  software: '<path d="M5 14L8 8H45L47 14V46H5Z" fill="url(#or)"/><path d="M5 13H47" stroke="#d85e2c" stroke-width="1.500"/><path d="M21 16V9Q21 5 26 5T32 9V16" fill="none" stroke="#e07a55" stroke-width="3"/><path d="M20 38L26 21 32 38" fill="none" stroke="#fff" stroke-width="4.500"/><path d="M17 32.500H35" stroke="#fff" stroke-width="4"/><path d="M19 32.500H29" stroke="#d05a20" stroke-width="1.600"/>',
  settings: '<circle cx="26" cy="25" r="15" fill="none" stroke="#ddd" stroke-width="8"/><circle cx="26" cy="25" r="19" fill="none" stroke="#ececec" stroke-width="5" stroke-dasharray="8 6.900"/><circle cx="26" cy="25" r="9" fill="#bfcaca"/><path d="M8 42L30 19" stroke="#b82c2c" stroke-width="7" stroke-linecap="round"/><path d="M11 37L29 18" stroke="#e77" stroke-width="1.500"/><path d="M29 20L33 13Q33 5 40 5L38 11 41 14 47 11Q48 18 40 20L33 24Z" fill="#f0f0f0" stroke="#aaa"/>',
  git: '<path d="M26 4L46 24 26 44 6 24Z" fill="url(#rd)" stroke="#f6c0c0" stroke-width="1.200" stroke-linejoin="round"/><path d="M20 10L26 16V31M26 16L34 24" stroke="#fff" stroke-width="2.400" fill="none"/><g fill="#fff"><circle cx="26" cy="15.500" r="3"/><circle cx="34" cy="24" r="3"/><circle cx="26" cy="31" r="3"/></g>',
  inkscape: '<path d="M26 3Q28 3 31 6L47 21Q50 25 45 27L36 29 38 33 30 37 32 43 24 46 18 41 20 37 10 35 14 30 8 27Q2 25 5 21L21 6Q24 3 26 3Z" fill="#111" stroke="#888"/><path d="M26 5L38 16 34 20 30 17 26 21 21 17 13 18Z" fill="#e8e8f0"/><path d="M12 26L36 28" stroke="#555" stroke-width="2"/><ellipse cx="42" cy="37" rx="4" ry="2"/><ellipse cx="9" cy="37" rx="3" ry="1.500"/>',
  gimp: '<path d="M18 16Q32 20 40 6Q44 34 26 34Q14 34 10 26Z" fill="#7d7466" stroke="#3b362e"/><circle cx="7" cy="22" r="5.500" fill="#161616"/><circle cx="5.500" cy="20.500" r="1.500" fill="#fff"/><circle cx="16" cy="19" r="4" fill="#fff"/><circle cx="25" cy="19.500" r="4.500" fill="#fff"/><circle cx="16" cy="20" r="1.800"/><circle cx="25" cy="20" r="2"/><path d="M28 28L43 36" stroke="#d8822a" stroke-width="3"/><path d="M42 33L48 42 43 39Z" fill="#111" stroke="#222" stroke-width="3"/>',
  vlc: '<path d="M9 38H43L46 47H6Z" fill="#e8690c"/><path d="M23 5Q26 2 29 5L39 39Q26 45 13 39Z" fill="#f08018"/><path d="M21.500 10H30.500L33 18H19ZM17.500 24H34.500L36.500 32H15.500Z" fill="#eee"/>',
  chrome: '<circle cx="26" cy="26" r="22" fill="#ffcc44"/><path d="M26 26L7 15A22 22 0 0 1 45.500 15.500H26Z" fill="#de5448"/><path d="M26 26L7 15A22 22 0 0 0 25 48L35.500 31Z" fill="#1aa05c"/><path d="M26 15.500H45.500A22 22 0 0 1 25 48L35.500 31Z" fill="#ffce44"/><circle cx="26" cy="26" r="10" fill="#fff"/><circle cx="26" cy="26" r="8" fill="#4688f4"/>',
  eclipse: '<circle cx="27" cy="26" r="22.500" fill="url(#pu)" stroke="#cfc2dd" stroke-width="1.500"/><ellipse cx="21" cy="13" rx="13" ry="8" fill="#e2d8ee" opacity=".55"/><path d="M6 21.500H48M5 25.500H49M5 29.500H49" stroke="#fff" stroke-width="1.500"/><ellipse cx="24" cy="40" rx="14" ry="6" fill="#c9b4e2" opacity=".5"/>',
  term: '<rect x="4" y="10" width="44" height="35" fill="#ddd" stroke="#888"/><rect x="7" y="13" width="38" height="29" fill="#2e2e2e" stroke="#111"/><path d="M12 17L18 22 12 27M20 29H28" fill="none" stroke="#f2f2f2" stroke-width="2.600"/>',
  star: '<path d="M26 3Q27 18 30 21T41 25Q32 27 30 29T26 47Q25 32 22 29T11 25Q20 23 22 21T26 3Z" fill="#ffee10" stroke="#111" stroke-width="1"/>',
  edit: '<rect x="9" y="6" width="34" height="40" fill="#f4f4f4" stroke="#bbb"/><path d="M15 13H36M15 16H38M15 19H34M15 24H38M15 27H35M15 30H37M15 34H32M15 37H30M15 40H33" stroke="#999" stroke-width="1"/><path d="M14 6V46" stroke="#e8a0a0" stroke-width=".8"/><path d="M26 36L42 20 46 24 30 38Z" fill="#333"/><path d="M41 20L45 16 49 20 45 25Z" fill="#e8a8cc"/><path d="M26 35L23 40 30 38Z" fill="#f0e080"/>',
  lamp: '<g filter="url(#bl)"><path d="M2 17Q12 20 20 18H32Q42 16 44 14L47 20Q40 24 34 26 30 28 28 30L31 36H20L24 30Q16 28 14 22Q8 20 2 18Z" fill="#a4730c"/><path d="M18 19Q26 15 36 19L30 25H20Z" fill="#e8c46a"/></g>',
  trash: '<path d="M9 6H43L39 46H13Z" fill="#93a9a8" opacity=".55"/><path d="M11 22L14 19 18 21 22 19 25 22 29 18 33 21 38 19 41 23 39 29 40 35 38 44Q26 49 14 44L12 36 14 31Z" fill="#f0f0f0"/><path d="M16 27L20 24 24 29 19 33ZM28 24L33 27 37 25 35 31ZM22 37L28 33 33 38 27 41ZM16 38L21 42" fill="#d2d2d2" stroke="#bdbdbd" stroke-width=".8"/><ellipse cx="26" cy="7.500" rx="17.500" ry="3.800" fill="#8fa3a3" stroke="#e8e8e8" stroke-width="2.800"/>'
};
const LDEF = '<defs><linearGradient id="gg" x1="0" y1="0" x2="0" y2="1"><stop offset="0" stop-color="#cfcfcf"/><stop offset="1" stop-color="#989898"/></linearGradient><linearGradient id="or" x1="0" y1="0" x2="0" y2="1"><stop offset="0" stop-color="#e6885a"/><stop offset="1" stop-color="#f2702c"/></linearGradient><linearGradient id="rd" x1="0" y1="0" x2="0" y2="1"><stop offset="0" stop-color="#ee6a6a"/><stop offset=".6" stop-color="#d41818"/><stop offset="1" stop-color="#c01010"/></linearGradient><linearGradient id="pu" x1="0" y1="0" x2="0" y2="1"><stop offset="0" stop-color="#8a72ac"/><stop offset=".5" stop-color="#4a3374"/><stop offset="1" stop-color="#8060a8"/></linearGradient><filter id="bl"><feGaussianBlur stdDeviation=".8"/></filter></defs>';
define('launcher-tile', `:host{position:relative;width:52px;height:52px;border-radius:4px;border:1px solid rgba(210,230,230,.38);background-color:var(--bg,rgba(120,155,155,.35));background-image:radial-gradient(ellipse at 50% 0,rgba(255,255,255,.38),rgba(255,255,255,.04) 70%);flex:none}
svg{display:block;width:52px;height:52px;margin:-1px}
.m{position:absolute;left:-7px;top:20px;width:5px;height:11px}.m.tri{background:#d6dcdc;clip-path:polygon(0 0,100% 50%,0 100%);width:5px;height:9px}
.m.bars{background:repeating-linear-gradient(#e0e4e4 0 3px,transparent 3px 4px)}.r{position:absolute;right:-7px;top:20px;width:5px;height:9px;background:#d6dcdc;clip-path:polygon(100% 0,0 50%,100% 100%)}`,
  el => `<svg viewBox="0 0 52 52">${LDEF}${L[el.getAttribute('app')]}</svg>` + (el.hasAttribute('run') ? `<div class="m ${el.getAttribute('run')}"></div>` : '') + (el.hasAttribute('focus') ? '<div class="r"></div>' : ''));

define('app-launcher', `:host{display:flex;flex-direction:column;gap:7px;width:65px;padding:6px 6px 6px;background:linear-gradient(#35555a 0,#4a6b6e 12px,#557a7c 120px,#52757a 300px,#4a6a70 520px,#456565 700px,#3f5a5c 1056px);border-right:1px solid #8fa3a5}.f{flex:1}`,
  () => [['dash', '', '#7fa6a3'], ['files', 'bars', '#8e3b48'], ['impress', ''], ['software', ''], ['settings', ''], ['git', ''], ['inkscape', ''], ['gimp', ''], ['vlc', ''], ['chrome', 'tri', '#a88a3c'], ['eclipse', ''], ['term', 'bars', '#b4b4b4'], ['star', 'tri', '#3a44cc'], ['edit', 'tri', '#b0b0b0'], ['lamp', 'tri', '#ad8838']]
    .map(t => `<launcher-tile app="${t[0]}" ${t[1] ? `run="${t[1]}"` : ''} ${t[0] === 'lamp' ? 'focus' : ''} ${t[2] ? `style="--bg:${t[2]}"` : ''}></launcher-tile>`).join('') + '<div class="f"></div><launcher-tile app="trash"></launcher-tile>');

/* ---------- docks ---------- */
define('dock-title', `:host{display:flex;align-items:center;height:23px;padding:0 9px 0 2.500px;flex:none}.f{flex:1}svg{width:11px;height:11px;margin-left:6px;overflow:visible}`,
  el => `<fit-text w="${el.getAttribute('w')}">${el.getAttribute('label')}</fit-text><div class="f"></div>
<svg viewBox="0 0 11 11"><rect x=".5" y=".5" width="10" height="10" rx="1.500" fill="none" stroke="#6b6b6b"/><path d="M4.500 4.500V2.500H8.500V6.500H6.500M2.500 4.500H6.500V8.500H2.500Z" fill="none" stroke="#6b6b6b"/></svg>
<svg viewBox="0 0 11 11"><rect x=".5" y=".5" width="10" height="10" rx="1.500" fill="none" stroke="#6b6b6b"/><path d="M3 3L8 8M8 3L3 8" stroke="#555" stroke-width="1.900"/></svg>`);

define('eye-icon', ':host{display:block;width:14px;height:9px;flex:none}svg{display:block}', el => {
  const on = el.hasAttribute('on'), c = on ? '#1b2340' : '#8d8d8d', p = on ? '#2c4c8c' : '#9a9a9a';
  return `<svg width="14" height="9" viewBox="0 0 14 9"><path d="M.7 4.500Q7-2.500 13.300 4.500Q7 11 .7 4.500Z" fill="#eee" stroke="${c}" stroke-width="1.100"/><circle cx="7.300" cy="4.500" r="3.200" fill="${p}"/><circle cx="7.300" cy="4.500" r="1.500" fill="${on ? '#0a0f20' : '#777'}"/><circle cx="6" cy="3.300" r=".9" fill="#fff"/></svg>`;
});

define('list-header', `:host{display:flex;height:26px;background:linear-gradient(#fefefe,#efeeec);border-bottom:1.500px solid #b4b1ac;flex:none}
::slotted(*){display:flex;align-items:center;height:100%;border-right:1px solid #d3d1ce;overflow:hidden}::slotted(:last-child){border-right:0}`, '<slot></slot>');

define('tree-row', `:host{display:flex;align-items:center;height:18px;flex:none;color:#474747}.e{width:61px;padding-left:4px;flex:none}.a{width:15px;display:flex;justify-content:center;flex:none}x-icon{width:16px;height:16px;margin:0 5.500px 0 3.500px}`,
  el => {
    const [eye, lvl, arr, icon, label, w] = el.getAttribute('data').split(',');
    return `<div class="e">${eye === '-' ? '' : `<eye-icon ${eye === '1' ? 'on' : ''}></eye-icon>`}</div><div style="width:${4.5 + lvl * 18.7}px;flex:none"></div><div class="a">${arr === 'd' ? '<svg width="9" height="8"><path d="M1 1H8L4.500 7.500Z" fill="#555" stroke="#333" stroke-width=".7"/></svg>' : arr === 'r' ? '<svg width="8" height="9"><path d="M1 1L7.500 4.500 1 8Z" fill="#777" stroke="#333" stroke-width=".9"/></svg>' : ''}</div><x-icon flat name="${icon}"></x-icon><fit-text w="${w}">${label}</fit-text>`;
  });

define('object-tree', `:host{display:flex;height:261px;border-top:1px solid #bcb9b5}
.m{width:214px;display:flex;flex-direction:column;background:#fff;border-left:1px solid #bcb9b5;border-right:1px solid #bcb9b5;overflow:hidden;flex:none}
.v{width:12.500px;margin-left:.5px;border:1px solid #bcb9b5;border-radius:7px;background:#dedcda;display:flex;flex-direction:column;align-items:center}
.t{height:218px;width:12.500px;margin-top:13px;border:1.500px solid #a9a6a2;border-radius:7px;background:linear-gradient(90deg,#fff,#ececea);display:flex;flex-direction:column;justify-content:center;align-items:center;gap:2px}.t i{width:5px;height:1px;background:#aaa}
.cap{margin-top:auto;height:12px}`,
  () => '<div class="m"><list-header><div style="width:61px;padding:2px 0 0 5px"><eye-icon on></eye-icon></div><div style="flex:1;padding:2px 0 0 121.500px"><fit-text w="39">Name</fit-text></div></list-header>' +
    ['-,0,d,geometry,Geometry,67.5', '0,1,,tpoint,O,10.5', '0,1,,tline,OX,20', '0,1,,tline,OY,20', '0,1,,tline,OZ,19', '0,1,r,tline,Circle_1,53', '1,1,r,tface,Complete_Thing,113', '0,1,r,tface,Plane_1,52', '0,1,r,tcomp,Cut_Cylinder,86', '-,0,d,tmesh,Mesh,36', '-,1,r,thyp,Hypotheses,80', '-,1,r,talg,Algorithms,75', '-,1,r,tm,Complete_Thing,113'].map(d => `<tree-row data="${d}"></tree-row>`).join('') +
    '</div><div class="v"><div class="t"><i></i><i></i><i></i></div><svg class="cap" width="7" height="12"><path d="M1 3H6L3.500 6.500Z" fill="#666"/></svg></div>');

define('h-scroll', `:host{display:flex;height:13px;width:215px;border:1px solid #bcb9b5;border-radius:7px;background:#dedcda;margin-top:1px;flex:none;align-items:center}
svg{width:12px;height:11px;flex:none;background:#f2f1ef}.t{width:115px;height:13px;border:1.500px solid #a9a6a2;border-radius:7px;background:linear-gradient(#fff,#ececea);display:flex;align-items:center;justify-content:center;gap:2px;flex:none}.t i{width:1px;height:4px;background:#aaa}`,
  '<svg viewBox="0 0 12 11" style="border-radius:6px 0 0 6px"><path d="M8 3V8L5 5.500Z" fill="#aaa"/></svg><div class="t"><i></i><i></i><i></i></div><div style="flex:1"></div><svg viewBox="0 0 12 11" style="border-radius:0 6px 6px 0"><path d="M4 3V8L7.500 5.500Z" fill="#555"/></svg>');

define('dock-tabs', `:host{display:flex;height:30px;border-top:1.500px solid #bcb9b5;flex:none}.t{display:flex;justify-content:center;align-items:center;border:1px solid #b5b2ae;border-top:0;border-radius:0 0 4px 4px}
.a{width:120.500px;height:29px;background:#fafafa;padding-top:2px}.b{width:86px;height:26px;background:linear-gradient(#dcdad8,#ebeae8);padding-top:2px}`,
  '<div class="t a"><fit-text w="105.5">Object Browser</fit-text></div><div class="t b"><fit-text w="69.5">NoteBook</fit-text></div>');

define('side-docks', `:host{display:flex;flex-direction:column;width:233px}.f{border:1px solid #bcb9b5;background:#fff;flex:none}`,
  `<dock-title label="Object Browser" w="105.5" style="margin-top:.5px"></dock-title><object-tree style="width:227px;flex:none"></object-tree><h-scroll></h-scroll><dock-tabs style="width:227px"></dock-tabs>
<dock-title label="Information" w="80.5" style="margin-top:7.500px"></dock-title>
<div class="f" style="margin:12px 0 0 11px;width:205px;height:174px"><list-header><div style="width:85px;padding-left:4px"><fit-text w="72">Parameter</fit-text></div><div style="flex:1;padding-left:4px"><fit-text w="38.5">Value</fit-text></div></list-header></div>
<dock-title label="Text" w="29.5" style="margin-top:18px"></dock-title>
<div class="f" style="width:227px;height:156px;margin-top:1px;color:#3c3c3c"><list-header style="color:#4a4a4a"><div style="width:61px;padding-left:5px"><eye-icon on></eye-icon></div><div style="flex:1;padding-left:4px"><fit-text w="40">Name</fit-text></div></list-header><div style="padding:0 0 0 84px;line-height:19px"><fit-text w="79.5">Dimensions</fit-text><fit-text w="84">Annotations</fit-text></div></div>`);

/* ---------- viewer ---------- */
define('scene-tabs', `:host{display:flex;height:32px;align-items:flex-end;padding-left:2px;flex:none}
.t{display:flex;justify-content:center;align-items:center;width:532px;border:1.500px solid #bdbab6;border-bottom:0;border-radius:4px 4px 0 0}
.a{height:30px;background:linear-gradient(#fff,#f2f1ef);color:#f07746;width:531px;border-right-color:#aaa7a3}.b{height:27px;background:linear-gradient(#f1f0ee,#d9d7d5);border-bottom:1.500px solid #b8b5b1;color:#444}.l{height:1.500px;background:#b8b5b1;width:530px}
.x{width:14px;height:14px;align-self:center;margin-left:7px;margin-top:1px}`,
  '<div class="t a"><fit-text w="153">OCC scene:1 - viewer:1</fit-text></div><div class="t b"><fit-text w="151">VTK scene:1 - viewer:1</fit-text></div><div class="l"></div><svg class="x" viewBox="0 0 14 14"><rect x=".5" y=".5" width="13" height="13" rx="3" fill="#ddd" stroke="#aaa"/><rect x="2" y="2" width="10" height="10" rx="1.500" fill="#fff" stroke="#666"/><path d="M4.500 4.500L9.500 9.500M9.500 4.500L4.500 9.500" stroke="#555" stroke-width="1.800"/></svg>');

define('scene-canvas', ':host{flex:1;min-height:0;background:linear-gradient(#ccdbff,#668eff)}svg{display:block}', `<svg width="1616" height="667" viewBox="0 0 1616 667">
<defs><linearGradient id="t" gradientUnits="userSpaceOnUse" x1="0" y1="550" x2="59.600" y2="446.700"><stop offset="0" stop-color="#3a3a3a"/><stop offset=".14" stop-color="#4b4b4b"/><stop offset=".42" stop-color="#5f5f5f"/><stop offset=".68" stop-color="#616161"/><stop offset=".84" stop-color="#4e4e4e"/><stop offset="1" stop-color="#343434"/></linearGradient>
<linearGradient id="e" gradientUnits="userSpaceOnUse" x1="222" y1="544" x2="200" y2="650"><stop offset="0" stop-color="#484848"/><stop offset=".3" stop-color="#646464"/><stop offset=".65" stop-color="#767676"/><stop offset="1" stop-color="#6c6c6c"/></linearGradient>
<clipPath id="c"><ellipse cx="204.800" cy="598.800" rx="60" ry="34.500" transform="rotate(-59.800 204.800 598.800)"/></clipPath></defs>
<path d="M0 412.300L228.300 544.500 205 599 172 648.500 0 550Z" fill="url(#t)"/>
<path d="M0 432L204.700 550" stroke="#000" stroke-width="1.100"/>
<ellipse cx="204.800" cy="598.800" rx="60.100" ry="34.600" transform="rotate(-59.800 204.800 598.800)" fill="url(#e)" stroke="#000" stroke-width="1.200"/>
<g clip-path="url(#c)"><path d="M176 574L205.500 599.500 168 589Z" fill="#bcc8bc"/><path d="M172 578L198 594.500M170 584L196 594M168 588L190 593.500" stroke="#7b817b" stroke-width="1" stroke-dasharray="3 1.500"/><path d="M172 580L194 592.700" stroke="#f01010" stroke-width="1.400"/></g>
<text x="204" y="600.700" font-family="Liberation Serif" font-weight="bold" font-size="12.500" fill="#ff0">X</text>
<path d="M25 642V630" stroke="#0000c8" stroke-width="1.800"/><path d="M22.800 632L25 627 27.200 632Z" fill="#0000c8"/>
<path d="M26 642L36 636" stroke="#00a000" stroke-width="1.800"/><path d="M33.500 635L39 634 36.500 638.500Z" fill="#00a000"/>
<path d="M26 643L36 648" stroke="#d00000" stroke-width="1.800"/><path d="M36 645L39 650 33.500 649.500Z" fill="#d00000"/><circle cx="25" cy="642.500" r="1.500" fill="#fff"/>
<g font-family="Liberation Serif" font-size="13" fill="#fff"><text x="24.500" y="624">Z</text><text x="41" y="632.700">Y</text><text x="40" y="652">X</text></g></svg>`);

define('scene-viewer', `:host{display:flex;flex-direction:column;flex:1;min-width:0;border-top:1.500px solid #c8c5c2;border-left:1.500px solid #c8c5c2}
tool-strip{height:40px;flex:none;--sep:10.500px}.c{display:flex;flex:1;padding:0 3px 0 1.500px;border-bottom:3px solid #fcfcfc;min-height:0}`,
  `<scene-tabs></scene-tabs><tool-strip items=": camera mouse *zstyle *sel1 *sel2 *trihedron fitall fitarea fitsel zoom pan gpan chpt rot vfront vback vtop vbottom vleft vright ccw cw *ortho persp stereo resetv graph dump | sync | flip ruler axes light minim syncv drop clip ccyl ray"></tool-strip><div class="c"><scene-canvas></scene-canvas></div>`);

define('python-console', `:host{display:flex;flex-direction:column;height:128px}.b{height:75px;border:1.500px solid #bcb9b5;background:#fff;padding:3.500px 4.500px;font:17px/20px "DejaVu Sans Mono",monospace;color:#111;margin-top:1px}
.s{height:17px;margin-top:2.500px;border:1.500px solid #c4c1be;border-left:0}`,
  '<dock-title label="Python Console" w="106" style="margin-top:7px;padding-right:3.500px"></dock-title><div class="b"><fit-text w="41.5">&gt;&gt;&gt;</fit-text></div><div class="s"></div>');

define('salome-desktop', `:host{display:grid;grid-template-rows:24px 1056px;width:1920px;height:1080px;background:#f2f1ef}.r{display:flex}.m{flex:1;display:flex;flex-direction:column;min-width:0}.w{display:flex;height:743px;flex:none}
tool-strip{height:40px;margin-left:-1.500px;flex:none}`,
  `<title-bar></title-bar><div class="r"><app-launcher></app-launcher><div class="m"><menu-bar></menu-bar>
<tool-strip items=": new open save del | copy paste : combo shaper *geometry mesh field calc yacs globe fish da eficas epx"></tool-strip>
<tool-strip items=": point line circle ellipse arc curve vector sketch poly sketch3 ribbon frame wplane lcs origin : box cyl sphere torus cone rect disk pipet : fuse common cut section : pic1 pic2"></tool-strip>
<tool-strip items=": translate rotate local mirror scale offset project ridge tap | multi mrot : part cut2 slice shrink same nto shield : ext rev fill pipe pipe2 thick : edge wire rect shell box comp : fillet1 fillet2 fillet3 chamfer hexf hexw"></tool-strip>
<tool-strip items=": quad hex : hexotic"></tool-strip>
<div class="w"><side-docks></side-docks><scene-viewer></scene-viewer></div><python-console></python-console></div></div>`);
</script>
</body>
</html>
